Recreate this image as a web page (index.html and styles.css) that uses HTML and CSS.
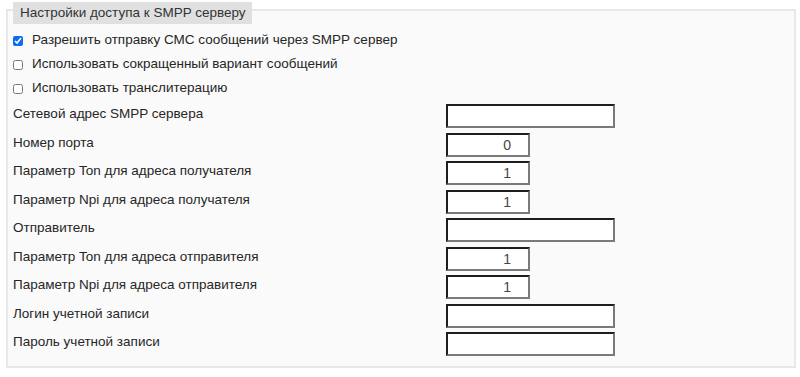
FILE: index.html
```html
<!DOCTYPE html>
<html lang="ru">
<head>
<meta charset="utf-8">
<link rel="stylesheet" href="styles.css">
</head>
<body>
<div class="panel">
  <div class="legend">Настройки доступа к SMPP серверу</div>
  <label class="check-row"><input type="checkbox" checked><span>Разрешить отправку СМС сообщений через SMPP сервер</span></label>
  <label class="check-row"><input type="checkbox"><span>Использовать сокращенный вариант сообщений</span></label>
  <label class="check-row"><input type="checkbox"><span>Использовать транслитерацию</span></label>
  <div class="fields">
    <div class="label">Сетевой адрес SMPP сервера</div><div class="cell"><input class="inp wide" type="text" value=""></div>
    <div class="label">Номер порта</div><div class="cell"><input class="inp narrow" type="text" value="0"></div>
    <div class="label">Параметр Ton для адреса получателя</div><div class="cell"><input class="inp narrow" type="text" value="1"></div>
    <div class="label">Параметр Npi для адреса получателя</div><div class="cell"><input class="inp narrow" type="text" value="1"></div>
    <div class="label">Отправитель</div><div class="cell"><input class="inp wide" type="text" value=""></div>
    <div class="label">Параметр Ton для адреса отправителя</div><div class="cell"><input class="inp narrow" type="text" value="1"></div>
    <div class="label">Параметр Npi для адреса отправителя</div><div class="cell"><input class="inp narrow" type="text" value="1"></div>
    <div class="label">Логин учетной записи</div><div class="cell"><input class="inp wide" type="text" value=""></div>
    <div class="label">Пароль учетной записи</div><div class="cell"><input class="inp wide" type="password" value=""></div>
  </div>
</div>
</body>
</html>
```
FILE: styles.css
```css
html, body {
  margin: 0;
  padding: 0;
  background: #ffffff;
}
body {
  font-family: "Liberation Sans", Arial, sans-serif;
  font-size: 13.5px;
  color: #262626;
}
.panel {
  position: relative;
  box-sizing: border-box;
  width: 790px;
  margin: 9px 0 0 6px;
  border: 2px solid #e8e8e8;
  background: #fafafa;
  padding: 17px 5px 9.5px 5px;
}
.legend {
  position: absolute;
  left: 5px;
  top: -9px;
  height: 22px;
  line-height: 22px;
  padding: 0 6px 0 7px;
  background: #e0e0e0;
  font-size: 13.5px;
  color: #333;
}
.check-row {
  display: flex;
  align-items: center;
  height: 24px;
  line-height: 16px;
}
.check-row input {
  width: 10px;
  height: 10px;
  margin: 1px 9px 0 0;
  accent-color: #0b6cf0;
}
.fields {
  display: grid;
  grid-template-columns: 433px auto;
  grid-auto-rows: 28.5px;
}
.label {
  line-height: 16px;
  padding-top: 6px;
}
.cell {
  padding-top: 4px;
}
.inp {
  display: block;
  box-sizing: border-box;
  height: 24px;
  margin: 0;
  border-width: 2px;
  border-style: solid;
  border-color: #1e1e1e #7a7a7a #7a7a7a #1e1e1e;
  background: #fff;
  font-family: "Liberation Sans", Arial, sans-serif;
  font-size: 14px;
  color: #444;
  text-align: right;
  padding: 0 17px 0 4px;
  outline: none;
}
.wide {
  width: 169px;
}
.narrow {
  width: 84px;
}
```
